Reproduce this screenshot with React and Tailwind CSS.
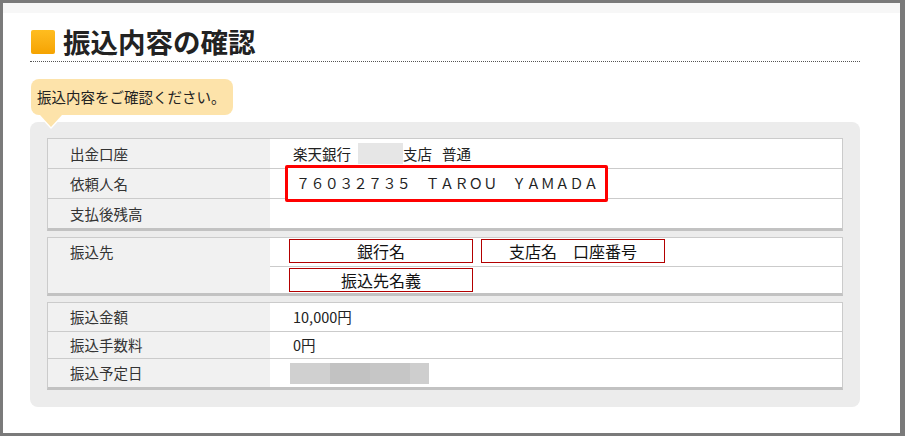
import React from "react";

const font = { fontFamily: '"Noto Sans CJK JP", "Noto Sans", sans-serif' };

const Label = ({ children, h }) => (
  <div className={`flex items-center bg-[#f1f1f1] pl-[22px] text-[14.5px] text-[#333] ${h}`}>
    {children}
  </div>
);

const RedBox = ({ children, w }) => (
  <div
    className={`flex h-[24px] items-center justify-center border border-[#b30000] bg-white text-[16px] text-[#111] ${w}`}
  >
    {children}
  </div>
);

const App = () => {
  return (
    <div
      className="h-[436px] w-[905px] overflow-hidden border-b-[3px] border-l-[3px] border-r-[5px] border-t-[3px] border-[#7a7a7a] bg-white"
      style={font}
    >
      <div className="h-[10px] bg-[#f7f7f7]" />
      <div className="pl-[27px] pr-[40px]">
        {/* heading */}
        <div className="mt-[15px] flex h-[28px] items-center gap-[8px]">
          <div className="ml-px h-[24px] w-[24px] rounded-[2px] bg-gradient-to-b from-[#ffbd1f] to-[#f5a300]" />
          <h1 className="text-[27.5px] font-bold leading-none text-[#222]">振込内容の確認</h1>
        </div>
        <div className="mt-[5px] border-b border-dotted border-[#555]" />

        {/* bubble */}
        <div className="relative z-10 ml-px mt-[17px] flex h-[36px] w-[202px] items-center rounded-[8px] bg-[#fde3aa] pl-[6px] text-[14.5px] text-[#222]">
          振込内容をご確認ください。
          <div className="absolute left-[7px] top-full h-0 w-0 border-l-[13px] border-r-[13px] border-t-[14px] border-l-transparent border-r-transparent border-t-white" />
          <div className="absolute left-[9px] top-full h-0 w-0 border-l-[11px] border-r-[11px] border-t-[12px] border-l-transparent border-r-transparent border-t-[#fde3aa]" />
        </div>

        {/* panel */}
        <div className="mt-[7px] flex flex-col gap-[6px] rounded-[8px] bg-[#ececec] pb-[17px] pl-[17px] pr-[17px] pt-[16px]">
          {/* table 1 */}
          <div className="border border-b-[3px] border-[#cbcbcb] border-b-[#c2c2c2] bg-white">
            <div className="grid grid-cols-[222px_1fr] border-b border-[#cbcbcb]">
              <Label h="h-[29px]">出金口座</Label>
              <div className="flex h-[29px] items-center pl-[23px] text-[14.5px] text-[#222]">
                <span>楽天銀行</span>
                <span className="ml-[7px] h-[21px] w-[45px] bg-[#e6e6e6]" />
                <span>支店</span>
                <span className="ml-[10px]">普通</span>
              </div>
            </div>
            <div className="grid grid-cols-[222px_1fr] border-b border-[#cbcbcb]">
              <Label h="h-[29px]">依頼人名</Label>
              <div className="relative h-[29px]">
                <div className="absolute left-[15px] top-[-4px] flex h-[37px] w-[323px] items-center rounded-[2px] border-[3px] border-[#ff0000] bg-white pl-[8px] text-[14px] tracking-[0.4px] text-[#222]">
                  ７６０３２７３５　ＴＡＲＯＵ　ＹＡＭＡＤＡ
                </div>
              </div>
            </div>
            <div className="grid grid-cols-[222px_1fr]">
              <Label h="h-[29px]">支払後残高</Label>
              <div className="h-[29px]" />
            </div>
          </div>

          {/* table 2 */}
          <div className="grid grid-cols-[222px_1fr] border border-b-[3px] border-[#cbcbcb] border-b-[#c2c2c2] bg-white">
            <div className="row-span-2 bg-[#f1f1f1]">
              <Label h="h-[28px]">振込先</Label>
            </div>
            <div className="flex h-[29px] gap-[8px] border-b border-[#cbcbcb] pl-[19px] pt-px">
              <RedBox w="w-[184px]">銀行名</RedBox>
              <RedBox w="w-[184px]">支店名　口座番号</RedBox>
            </div>
            <div className="h-[26px] pl-[19px] pt-px">
              <RedBox w="w-[184px]">振込先名義</RedBox>
            </div>
          </div>

          {/* table 3 */}
          <div className="border border-b-[3px] border-[#cbcbcb] border-b-[#c2c2c2] bg-white">
            <div className="grid grid-cols-[222px_1fr] border-b border-[#cbcbcb]">
              <Label h="h-[28px]">振込金額</Label>
              <div className="flex h-[28px] items-center pl-[23px] text-[14.5px] text-[#222]">10,000円</div>
            </div>
            <div className="grid grid-cols-[222px_1fr] border-b border-[#cbcbcb]">
              <Label h="h-[26px]">振込手数料</Label>
              <div className="flex h-[26px] items-center pl-[23px] text-[14.5px] text-[#222]">0円</div>
            </div>
            <div className="grid grid-cols-[222px_1fr]">
              <Label h="h-[28px]">振込予定日</Label>
              <div className="flex h-[28px] items-center pl-[20px]">
                <div className="flex h-[21px]">
                  <span className="w-[40px] bg-[#d0d0d0]" />
                  <span className="w-[40px] bg-[#c2c2c2]" />
                  <span className="w-[40px] bg-[#c6c6c6]" />
                  <span className="w-[19px] bg-[#cecece]" />
                </div>
              </div>
            </div>
          </div>
        </div>
      </div>
    </div>
  );
};

export default App;
